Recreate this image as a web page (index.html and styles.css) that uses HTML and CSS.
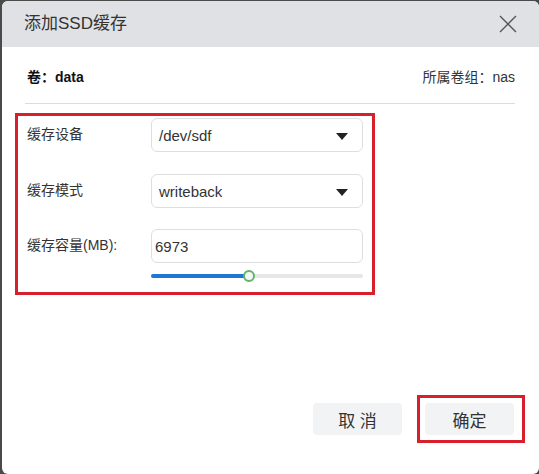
FILE: index.html
```html
<!DOCTYPE html>
<html lang="zh-CN">
<head>
  <meta charset="UTF-8" />
  <title>添加SSD缓存</title>
  <link rel="stylesheet" href="styles.css">
</head>
<body>
  <div class="dialog">
    <div class="dialog-header">
      <span class="dialog-title">添加SSD缓存</span>
      <svg class="close" width="18" height="18" viewBox="0 0 18 18">
        <path d="M1 1 L17 17 M17 1 L1 17" stroke="#555" stroke-width="1.4" fill="none" />
      </svg>
    </div>

    <div class="dialog-body">
      <div class="info-row">
        <span class="volume">卷：data</span>
        <span class="group">所属卷组：nas</span>
      </div>
      <div class="divider"></div>

      <div class="highlight form-box">
        <div class="form-row">
          <label>缓存设备</label>
          <div class="select">
            <span>/dev/sdf</span>
            <span class="caret"></span>
          </div>
        </div>
        <div class="form-row">
          <label>缓存模式</label>
          <div class="select">
            <span>writeback</span>
            <span class="caret"></span>
          </div>
        </div>
        <div class="form-row">
          <label>缓存容量(MB):</label>
          <div class="input">6973</div>
        </div>
        <div class="slider-row">
          <div class="slider">
            <div class="slider-fill" style="width: 97px"></div>
            <div class="slider-thumb"></div>
          </div>
        </div>
      </div>
    </div>

    <div class="dialog-footer">
      <button class="btn">取 消</button>
      <div class="highlight btn-box">
        <button class="btn">确定</button>
      </div>
    </div>
  </div>
</body>
</html>
```

FILE: styles.css
```css
body {
  margin: 0;
  background: #4a4a4a;
  font-family: "Liberation Sans", "Noto Sans CJK SC", sans-serif;
  color: #333;
}

.dialog {
  margin: 1px 0 0 2px;
  width: 537px;
  height: 473px;
  background: #ffffff;
  border-radius: 6px;
  overflow: hidden;
  display: flex;
  flex-direction: column;
}

.dialog-header {
  height: 46px;
  background: #e0e1e4;
  display: flex;
  align-items: center;
  justify-content: space-between;
  padding: 0 22px 0 22px;
}

.dialog-title {
  font-size: 17px;
  line-height: 20px;
  color: #333;
}

.dialog-body {
  padding: 0 24px 0 23px;
}

.info-row {
  display: flex;
  justify-content: space-between;
  align-items: center;
  padding-top: 21px;
  height: 18px;
  font-size: 14px;
  line-height: 18px;
  padding-left: 2px;
}

.volume {
  font-weight: bold;
  color: #111;
}

.group {
  color: #333;
}

.divider {
  margin-top: 17px;
  height: 1px;
  background: #dcdcdc;
}

.highlight {
  border: 3px solid #d7202c;
}

.form-box {
  margin: 9px 0 0 -10px;
  width: 345px;
  height: 174px;
  padding: 2px 0 0 9px;
}

.form-row {
  display: flex;
  align-items: center;
  margin-bottom: 22px;
}

.form-row:nth-child(2) {
  margin-bottom: 21px;
}

.form-row:nth-child(3) {
  margin-bottom: 0;
}

.form-row label {
  flex: 0 0 124px;
  font-size: 14px;
  line-height: 18px;
  margin-top: -3px;
  color: #333;
}

.select,
.input {
  width: 212px;
  height: 34px;
  box-sizing: border-box;
  border: 1px solid #dedede;
  border-radius: 6px;
  display: flex;
  align-items: center;
  font-size: 15px;
  color: #333;
}

.select {
  justify-content: space-between;
  padding: 0 14px 0 7px;
}

.input {
  padding: 0 3px;
}

.caret {
  width: 0;
  height: 0;
  border-left: 6px solid transparent;
  border-right: 6px solid transparent;
  border-top: 7px solid #222;
  margin-top: 2px;
}

.slider-row {
  padding: 11px 0 0 124px;
}

.slider {
  position: relative;
  width: 212px;
  height: 4px;
  background: #e6e6e6;
  border-radius: 2px;
}

.slider-fill {
  height: 4px;
  background: #1e78d2;
  border-radius: 2px;
}

.slider-thumb {
  position: absolute;
  left: 92px;
  top: -4px;
  width: 8px;
  height: 8px;
  border-radius: 50%;
  background: #f4f8f2;
  border: 2px solid #5fb36a;
}

.dialog-footer {
  margin-top: auto;
  display: flex;
  justify-content: flex-end;
  align-items: center;
  gap: 15px;
  padding: 0 14px 31px 0;
}

.btn {
  width: 89px;
  height: 32px;
  border: none;
  border-radius: 4px;
  background: #f2f3f5;
  font-family: "Liberation Sans", "Noto Sans CJK SC", sans-serif;
  font-size: 17px;
  color: #333;
  padding: 0;
}

.btn-box {
  padding: 5px 0 5px 5px;
  width: 97px;
}
```
